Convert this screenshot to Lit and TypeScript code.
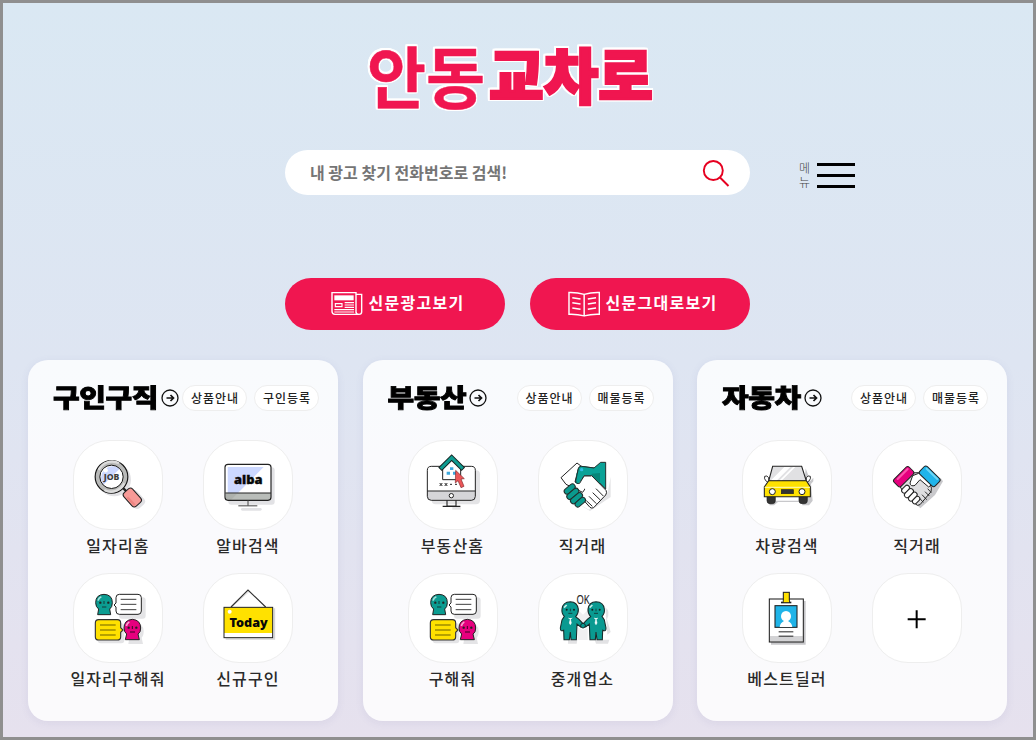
import { LitElement, html, css, svg, SVGTemplateResult } from "lit";
import { customElement, property } from "lit/decorators.js";

const chat = svg`
  <g fill="#e4e4e6"><rect x="178" y="88" width="80" height="64" rx="9"/><rect x="114" y="166" width="80" height="60" rx="9"/><path d="M198 190q0-24 27-24t27 24q0 14-6 19l4 19h-44l3-19q-11-8-11-19z"/></g>
  <path d="M108 104q0-24 25-25 25 1 25 25 0 14-8 19l3 17h-39l3-17q-9-6-9-19z" fill="#0b9c91" stroke="#222" stroke-width="3"/>
  <path d="M115 98q2-9 10-12" stroke="#a9dfda" stroke-width="5" fill="none"/>
  <path d="M133 99v9M127 117h13" stroke="#153a3a" stroke-width="3"/><g fill="#222"><circle cx="122" cy="104" r="3.5"/><circle cx="146" cy="104" r="3.5"/></g>
  <path d="M179 79h56q10 0 10 10v40q0 10-10 10h-56q-10 0-10-10v-12l-6-6 6-6V89q0-10 10-10z" fill="#fff" stroke="#222" stroke-width="3"/>
  <path d="M183 94h47M183 109h47M183 125h47" stroke="#222" stroke-width="2.6"/>
  <path d="M117 155h56q10 0 10 10v14l7 7-7 7v13q0 10-10 10h-56q-10 0-10-10v-41q0-10 10-10z" fill="#ffe100" stroke="#333" stroke-width="3.4"/>
  <path d="M121 171h47M121 186h47M121 201h47" stroke="#554c00" stroke-width="2.6"/>
  <path d="M193 180q0-24 25-26 25 2 25 26 0 14-8 18l4 17h-42l4-17q-8-6-8-18z" fill="#e6007e" stroke="#222" stroke-width="3"/>
  <path d="M200 174q2-9 9-12" stroke="#f7a6d0" stroke-width="5" fill="none"/>
  <path d="M218 174v9M211 192h15" stroke="#3b0523" stroke-width="3"/><g fill="#222"><circle cx="207" cy="179" r="3.5"/><circle cx="230" cy="179" r="3.5"/></g>`;

const job = svg`
  <g fill="#e2e2e5"><circle cx="164" cy="134" r="50"/><rect x="203" y="174" width="53" height="39" rx="12" transform="rotate(48 229 193)"/></g>
  <path d="M189 158l16 16" stroke="#222" stroke-width="7"/>
  <circle cx="155.500" cy="125.500" r="49" fill="#b9bab9" stroke="#161616" stroke-width="3.500"/>
  <path d="M117 105a44 44 0 0 1 61-20M194 145a44 44 0 0 1-60 20" stroke="#dcdcdc" stroke-width="7" fill="none"/>
  <circle cx="155.500" cy="125.500" r="35" fill="#fff"/>
  <path d="M131 150a35 35 0 0 1 49-49z" fill="#ccd8ff"/>
  <circle cx="155.500" cy="125.500" r="35" fill="none" stroke="#161616" stroke-width="3"/>
  <circle cx="138" cy="106" r="6.500" fill="#fff"/>
  <text x="155.500" y="133.500" class="glyph" font-size="24" font-weight="800" fill="#3c3c3c" text-anchor="middle" textLength="47" lengthAdjust="spacingAndGlyphs">JOB</text>
  <rect x="191" y="170" width="54" height="35" rx="9" transform="rotate(48 218 187.500)" fill="#f79a97" stroke="#222" stroke-width="3"/>
  <path d="M203 187l22 23" stroke="#ee8582" stroke-width="7"/>`;

const alba = svg`
  <g fill="#e2e2e5"><rect x="506" y="97" width="139" height="112" rx="9"/><rect x="544" y="219" width="62" height="8" rx="4"/></g>
  <rect x="496" y="88" width="138" height="108" rx="9" fill="#fff"/>
  <path d="M504 96h108l-78 79h-30z" fill="#ccd8ff"/>
  <path d="M498 175h135v12q0 8-8 8H506q-8 0-8-8z" fill="#adb1ad"/><path d="M534 175h98v12q0 8-8 8H514z" fill="#b9bdb9"/>
  <path d="M497 174h137" stroke="#222" stroke-width="3.500"/>
  <rect x="496" y="88" width="138" height="108" rx="9" fill="none" stroke="#222" stroke-width="3.500"/>
  <path d="M565 196v16M536 212.500h57" stroke="#444" stroke-width="3"/>
  <text x="566" y="148" class="glyph" font-size="39" font-weight="900" fill="#080808" stroke="#080808" stroke-width="1" text-anchor="middle" textLength="86" lengthAdjust="spacingAndGlyphs">alba</text>`;

const today = svg`
  <path d="M498 213h146v-92" fill="none" stroke="#d6d6d8" stroke-width="5"/>
  <path d="M512 120l57-50 53 50" stroke="#ddd" stroke-width="3" fill="none"/>
  <path d="M514 117l51-51 53 51" stroke="#333" stroke-width="3.500" fill="none"/>
  <rect x="493" y="118" width="146" height="91" fill="#fff"/><rect x="493" y="118" width="146" height="77" fill="#ffe100"/>
  <rect x="493" y="118" width="146" height="91" fill="none" stroke="#222" stroke-width="3"/>
  <circle cx="510" cy="131" r="6" fill="#fff"/>
  <text x="567" y="177" class="glyph" font-size="37" font-weight="900" fill="#080808" text-anchor="middle" textLength="115" lengthAdjust="spacingAndGlyphs">Today</text>`;

const house = svg`
  <g fill="#e4e4e6"><rect x="111" y="106" width="145" height="102" rx="12"/><rect x="173" y="213" width="25" height="11"/></g>
  <path d="M108 94h122q12 0 12 12v77q0 12-12 12H109q-11 0-11-12v-77q0-12 10-12z" fill="#fff"/>
  <path d="M98 169h144v14q0 12-12 12H109q-11 0-11-12z" fill="#d5d5d8"/>
  <path d="M98 168h144" stroke="#222" stroke-width="3"/>
  <rect x="98" y="94" width="144" height="102" rx="12" fill="none" stroke="#222" stroke-width="3"/>
  <circle cx="170" cy="182" r="6.500" fill="#fff" stroke="#222" stroke-width="3"/>
  <path d="M157 196v17h27v-17M144 214h53" fill="none" stroke="#222" stroke-width="3.300"/>
  <path d="M144 97l27-24 27 25v36h-54z" fill="#fff" stroke="#222" stroke-width="3"/>
  <path d="M136 103l35-35 35 35" fill="none" stroke="#17211f" stroke-width="15"/><path d="M138 101l33-33 33 33" fill="none" stroke="#109b90" stroke-width="9"/>
  <g fill="#3ea9de"><path d="M166 97h10v8h-10zM156 110h10v9h-10zM175 110h10v9h-10z"/></g>
  <path d="M135 144l8 9m0-9l-8 9M150 144l8 9m0-9l-8 9M166 148h6M181 148h6" stroke="#222" stroke-width="3"/>
  <path d="M183 106l26 25-10 1 9 22-9 4-9-21-8 7z" fill="#ed5658" stroke="#7e2d30" stroke-width="2"/>`;

const deal = svg`
  <path d="M540 200l46 28 62-42V125l-9 49-56 50z" fill="#e4e4e6"/>
  <path d="M499 128l48-44 22 17-5 21 15 28-15 22-50-24z" fill="#fff" stroke="#222" stroke-width="3"/>
  <path d="M551 101q2-7 9-7l38 5 20-17h15v80l-36-37-29-4-14 21q-8 5-13-1z" fill="#0aa297" stroke="#24302e" stroke-width="3"/>
  <path d="M582 117l34-3v43l-34-30z" fill="#078679"/>
  <circle cx="561" cy="104" r="5" fill="#34bce5"/>
  <path d="M568 121h22l44 45q4 7-1 14l-36 38q-6 3-11-1l-17-19 5-31-12-24z" fill="#fff"/>
  <path d="M568 121h22l44 45q4 7-1 14l-36 38q-6 3-11-1l-17-19" fill="none" stroke="#222" stroke-width="3"/>
  <path d="M568 121l-14 22q-6 6-10 2l1-27 6-17q2-7 9-7l38 5-8 22z" fill="#0aa297"/>
  <path d="M598 99l-38-5q-7 0-9 7l-8 37q2 10 12 7l13-22h22" fill="none" stroke="#24302e" stroke-width="3"/>
  <circle cx="561" cy="104" r="5" fill="#34bce5"/>
  <g transform="translate(540 183) rotate(-40)" fill="#0a9a8e" stroke="#202d2b" stroke-width="3"><rect x="-17" y="-34" width="38" height="17" rx="8.500"/><rect x="-21" y="-17" width="42" height="17" rx="8.500"/><rect x="-21" y="0" width="42" height="17" rx="8.500"/><rect x="-17" y="17" width="36" height="16" rx="8"/></g>
  <path d="M604 161l22 22M594 173l23 22M583 184l22 22M575 197l18 17" stroke="#222" stroke-width="3"/>`;

const person = (dx: number, flip: boolean) => svg`<g transform=${`translate(${dx} 0)`}>
  <path d="M509 145q-9-9-7-22 2-21 25-22 21 1 24 22 1 13-8 23l10 8 12 13-7 10-11-9-2 47h-16l-2-23-3 23h-16l-1-28q-10 5-10-7l5-24z"
    transform=${flip ? "translate(1054 0) scale(-1 1)" : ""} fill="#0a9a91" stroke="#182b2a" stroke-width="3.200"/>
  <path d="M508 119l8-8" stroke="#c8eeea" stroke-width="5"/><path d="M527 122v8M521 136h12" stroke="#133b3a" stroke-width="2.800"/>
  <circle cx="516" cy="125" r="3" fill="#122"/><circle cx="538" cy="125" r="3" fill="#122"/>
  <path d="M521 150l6 3 6-3M527 153l-3 12 3 5 3-5z" fill="#fff" stroke="#fff" stroke-width="1.800"/></g>`;

const ok = svg`
  <path d="M520 215h28l-2 12h-26zM600 215h44l-4 12h-36zM632 118q16 12 5 36l11 38-10 8z" fill="#e2e2e4"/>
  <path d="M548 124l17 16 17-16v38l-17 8-17-8zM549 178l16 8 14-6v36h-30z" fill="#f0f0f1"/>
  ${person(0, false)}${person(77, true)}
  <circle cx="565" cy="173" r="7" fill="#0a9a91" stroke="#182b2a" stroke-width="3"/>
  <text x="565" y="107" class="plain" font-size="37" fill="#222" stroke="#222" stroke-width=".5" text-anchor="middle" textLength="39" lengthAdjust="spacingAndGlyphs">OK</text>`;

const car = svg`
  <path d="M228 100l14 38 9-10v11l-7 8 5 50-11 14h-20v-10H145l-12 10h-14v-14h101z" fill="#c8c8cb"/>
  <g fill="#333" stroke="#222" stroke-width="2"><rect x="112" y="173" width="25" height="33" rx="9"/><rect x="208" y="173" width="25" height="33" rx="9"/></g>
  <path d="M129 94h87l14 44H117z" fill="#e1e1e3" stroke="#222" stroke-width="3.200"/>
  <path d="M164 96h18l-40 40h-18zM190 96h7l-40 40h-7z" fill="#fff"/>
  <path d="M117 143l-7-4q-8-8-5-15 7-4 12 4zM230 143l7-4q8-8 5-15-7-4-12 4z" fill="#fff" stroke="#333" stroke-width="3"/>
  <path d="M117 137h113l12 19v29H104v-29z" fill="#ffe100" stroke="#222" stroke-width="3.200"/>
  <path d="M105 157h136" stroke="#fff59b" stroke-width="4"/>
  <circle cx="128" cy="170" r="9" fill="#fff" stroke="#222" stroke-width="3"/><circle cx="217" cy="170" r="9" fill="#fff" stroke="#222" stroke-width="3"/>
  <rect x="155" y="164" width="36" height="12" fill="#333" stroke="#222" stroke-width="2"/>`;

const shake = svg`
  <path d="M530 180l42 40 44-40 24-41-7-10-65 68z" fill="#c9c9cc"/>
  <path d="M512 156l28-42 27-1 34 31q7 18 3 26l-33 39q-7 5-14-2l-39-41z" fill="#dedee0" stroke="#222" stroke-width="3"/>
  <path d="M541 144l8-22 18-7 23-1 18 33-11 9-26-22-15 17q-13 5-15-7z" fill="#fff" stroke="#222" stroke-width="3"/>
  <g transform="translate(545 180) rotate(-46)" fill="#fff" stroke="#222" stroke-width="3"><rect x="-13" y="-32" width="27" height="15" rx="7.500"/><rect x="-17" y="-17" width="32" height="16" rx="8"/><rect x="-16" y="-1" width="31" height="15" rx="7.500"/><rect x="-14" y="14" width="26" height="14" rx="7"/></g>
  <path d="M577 179l14 15M586 170l13 13M594 161l11 12M570 190l11 12" stroke="#222" stroke-width="2.800"/>
  <g stroke="#222" stroke-width="3"><rect x="490" y="110" width="64" height="30" rx="7" transform="rotate(-45 522 125)" fill="#e6007e"/><rect x="568" y="108" width="64" height="32" rx="7" transform="rotate(44 600 124)" fill="#20b4ea"/></g>
  <path d="M504 132l30-30" stroke="#fa54ac" stroke-width="6" stroke-linecap="round"/><path d="M591 101l32 31" stroke="#6bd5f6" stroke-width="6" stroke-linecap="round"/>`;

const badge = svg`
  <path d="M124 630h104V499h-6v123h-98z" fill="#c7c7ca"/>
  <rect x="119" y="493" width="102" height="129" fill="#fff"/><path d="M121 604h98v17h-98z" fill="#d3d3d5"/>
  <rect x="119" y="493" width="102" height="129" fill="none" stroke="#222" stroke-width="3.200"/>
  <rect x="136" y="513" width="66" height="65" fill="#20b4e8" stroke="#222" stroke-width="3.200"/>
  <path d="M150 577q1-12 13-18-9-4-9-15 1-14 15-15 14 1 15 15 0 11-9 15 12 6 13 18z" fill="#fff"/>
  <path d="M147 591.500h44M147 604.500h44" stroke="#222" stroke-width="3"/>
  <rect x="161" y="473" width="18" height="30" fill="#ffe100" stroke="#222" stroke-width="3.200"/><path d="M154 501h31v5h-31z" fill="#222"/><path d="M162 500h16" stroke="#ffe100" stroke-width="5"/>`;

const plus = svg`<path d="M561 525v54M534 552h54" stroke="#000" stroke-width="6"/>`;

type Item = { label: string; box: string; art: SVGTemplateResult };
type Section = { title: string; links: string[]; items: Item[] };

const sections: Section[] = [
  { title: "구인구직", links: ["상품안내", "구인등록"], items: [
    { label: "일자리홈", box: "40 15 270 270", art: job },
    { label: "알바검색", box: "430 15 270 270", art: alba },
    { label: "일자리구해줘", box: "40 15 270 270", art: chat },
    { label: "신규구인", box: "430 15 270 270", art: today } ] },
  { title: "부동산", links: ["상품안내", "매물등록"], items: [
    { label: "부동산홈", box: "40 15 270 270", art: house },
    { label: "직거래", box: "430 15 270 270", art: deal },
    { label: "구해줘", box: "40 15 270 270", art: chat },
    { label: "중개업소", box: "430 15 270 270", art: ok } ] },
  { title: "자동차", links: ["상품안내", "매물등록"], items: [
    { label: "차량검색", box: "37 15 270 270", art: car },
    { label: "직거래", box: "427 15 270 270", art: shake },
    { label: "베스트딜러", box: "37 415 270 270", art: badge },
    { label: "", box: "427 413 270 270", art: plus } ] },
];

@customElement("category-card")
class CategoryCard extends LitElement {
  @property({ attribute: false }) section!: Section;
  static styles = css`
    :host { display: block; box-sizing: border-box; width: 310px; height: 361px; border-radius: 20px; background: rgba(255,255,255,.82); box-shadow: 0 2px 8px rgba(90,90,150,.09); }
    .head { display: flex; align-items: center; height: 26px; padding: 25px 19px 0 25px; }
    h2 { margin: 0 3px 5px 0; font-size: 29px; line-height: 26px; font-weight: 900; letter-spacing: -.4px; -webkit-text-stroke: 1px #000; color: #000; white-space: nowrap; transform: scaleY(.88); }
    .arrow { width: 18px; height: 18px; flex: none; }
    .links { display: flex; gap: 7px; margin-left: auto; }
    .link { box-sizing: border-box; width: 65px; height: 26px; border: 1px solid #eee; border-radius: 13px; background: #fff; font-size: 12px; font-weight: 500; line-height: 24px; letter-spacing: 1px; text-indent: 1px; text-align: center; color: #222; white-space: nowrap; }
    .grid { display: grid; grid-template-columns: 130px 130px; grid-auto-rows: 133px; padding: 29px 25px 0; }
    .item { display: flex; flex-direction: column; align-items: center; color: #2a2a2a; }
    .tile { box-sizing: border-box; width: 90px; height: 90px; border: 1px solid #eee; border-radius: 36px; background: #fff; }
    .tile svg { display: block; width: 90px; height: 90px; margin: -1px; }
    .label { margin-top: 3px; font-size: 16px; font-weight: 500; line-height: 24px; letter-spacing: 1.150px; white-space: nowrap; }
    .glyph { font-family: "Noto Sans", "Open Sans", sans-serif; }
    .plain { font-family: "Open Sans", sans-serif; }
  `;
  render() {
    const s = this.section;
    return html`
      <div class="head">
        <h2>${s.title}</h2>
        <svg class="arrow" viewBox="0 0 18 18" fill="none" stroke="#111"><circle cx="9" cy="9" r="8" stroke-width="1.300"/><path d="M5.500 9h7M9.500 6l3 3-3 3" stroke-width="1.700"/></svg>
        <div class="links">${s.links.map((l) => html`<span class="link">${l}</span>`)}</div>
      </div>
      <div class="grid">${s.items.map((i) => html`
        <div class="item"><div class="tile"><svg viewBox=${i.box}>${i.art}</svg></div><span class="label">${i.label}</span></div>`)}</div>`;
  }
}

@customElement("app-root")
class AppRoot extends LitElement {
  static styles = css`
    :host { display: block; box-sizing: border-box; width: 1036px; height: 740px; overflow: hidden; border: 3px solid #8f8f8f; background: linear-gradient(#dae8f3, #dee5f2 49%, #e6e1ee); font-family: "Noto Sans CJK KR", sans-serif; }
    .logo { display: block; width: 300px; height: 84px; margin: 33px 0 0 357px; overflow: visible; filter: drop-shadow(1.500px 0 0 #fff) drop-shadow(-1.500px 0 0 #fff) drop-shadow(0 1.500px 0 #fff) drop-shadow(0 -1.500px 0 #fff); }
    .bar { display: flex; align-items: center; margin: 30px 0 0 282px; height: 45px; }
    .search { box-sizing: border-box; display: flex; align-items: center; justify-content: space-between; width: 465px; height: 45px; padding: 0 20px 0 25px; border-radius: 23px; background: #fff; color: #757575; font-size: 16px; font-weight: 700; }
    .search span { margin-bottom: 2px; }
    .search svg { width: 28px; height: 28px; }
    .menu { display: flex; align-items: center; margin: 6px 0 0 49px; gap: 5px; }
    .word { width: 13px; margin-bottom: 2px; font-size: 12px; line-height: 14px; font-weight: 300; color: #444; word-break: break-all; }
    .lines { display: flex; flex-direction: column; gap: 8px; width: 38px; }
    .line { height: 3px; background: #000; }
    .buttons { display: flex; gap: 25px; margin: 83px 0 0 282px; }
    .button { box-sizing: border-box; display: flex; align-items: center; justify-content: center; width: 220px; height: 52px; border-radius: 26px; background: #f01650; color: #fff; font-size: 16px; font-weight: 600; letter-spacing: 1.250px; padding: 0 0 2px 5px; }
    .button svg { width: 32px; height: 26px; margin: 2px 6px 0 0; }
    .button span { margin-bottom: 3px; }
    .cards { display: flex; justify-content: space-between; width: 979px; margin: 30px 0 0 25px; }
  `;
  render() {
    return html`
      <svg class="logo" viewBox="360 36 300 84" fill="#f01650" stroke="#f01650" font-family="Noto Sans CJK KR">
        <text x="367" y="103" font-size="67" font-weight="700" stroke-width=".5" textLength="118" lengthAdjust="spacingAndGlyphs">안동</text>
        <text x="489" y="98.500" font-size="60" font-weight="900" stroke-width="2.500" textLength="164" lengthAdjust="spacingAndGlyphs">교차로</text>
      </svg>
      <div class="bar">
        <div class="search"><span>내 광고 찾기 전화번호로 검색!</span>
          <svg viewBox="702 159 28 28" fill="none" stroke="#e60020" stroke-width="1.900"><circle cx="713.300" cy="170.500" r="9.500"/><path d="M720 177.500l8.500 8.500"/></svg>
        </div>
        <div class="menu"><div class="word">메뉴</div><div class="lines"><div class="line"></div><div class="line"></div><div class="line"></div></div></div>
      </div>
      <div class="buttons">
        <div class="button">
          <svg viewBox="152 63 96 78" fill="none" stroke="#fff" stroke-width="4.200"><path d="M227 128V68H155v56q0 9 9 9h72M227 73h17v53q0 7-8 7-9 0-9-8"/><path d="M162 76h58v15h-58z" fill="#fff" stroke="none"/><path d="M165 101h20v9h-20zM193 98h28M193 105h28M193 112h28M162 119h59M162 126h59" stroke-width="3.400"/></svg>
          <span>신문광고보기</span></div>
        <div class="button">
          <svg viewBox="863 61 97 78" fill="none" stroke="#fff" stroke-width="4.400"><path d="M912 71q-22-7-46-6v66q24-1 46 5 22-6 46-5V65q-24-1-46 6zM912 71v65"/><path d="M876 81l25 4M876 96l25 4M876 112l25 4M948 81l-25 4M948 96l-25 4M948 112l-25 4"/></svg>
          <span>신문그대로보기</span></div>
      </div>
      <div class="cards">${sections.map((s) => html`<category-card .section=${s}></category-card>`)}</div>`;
  }
}
